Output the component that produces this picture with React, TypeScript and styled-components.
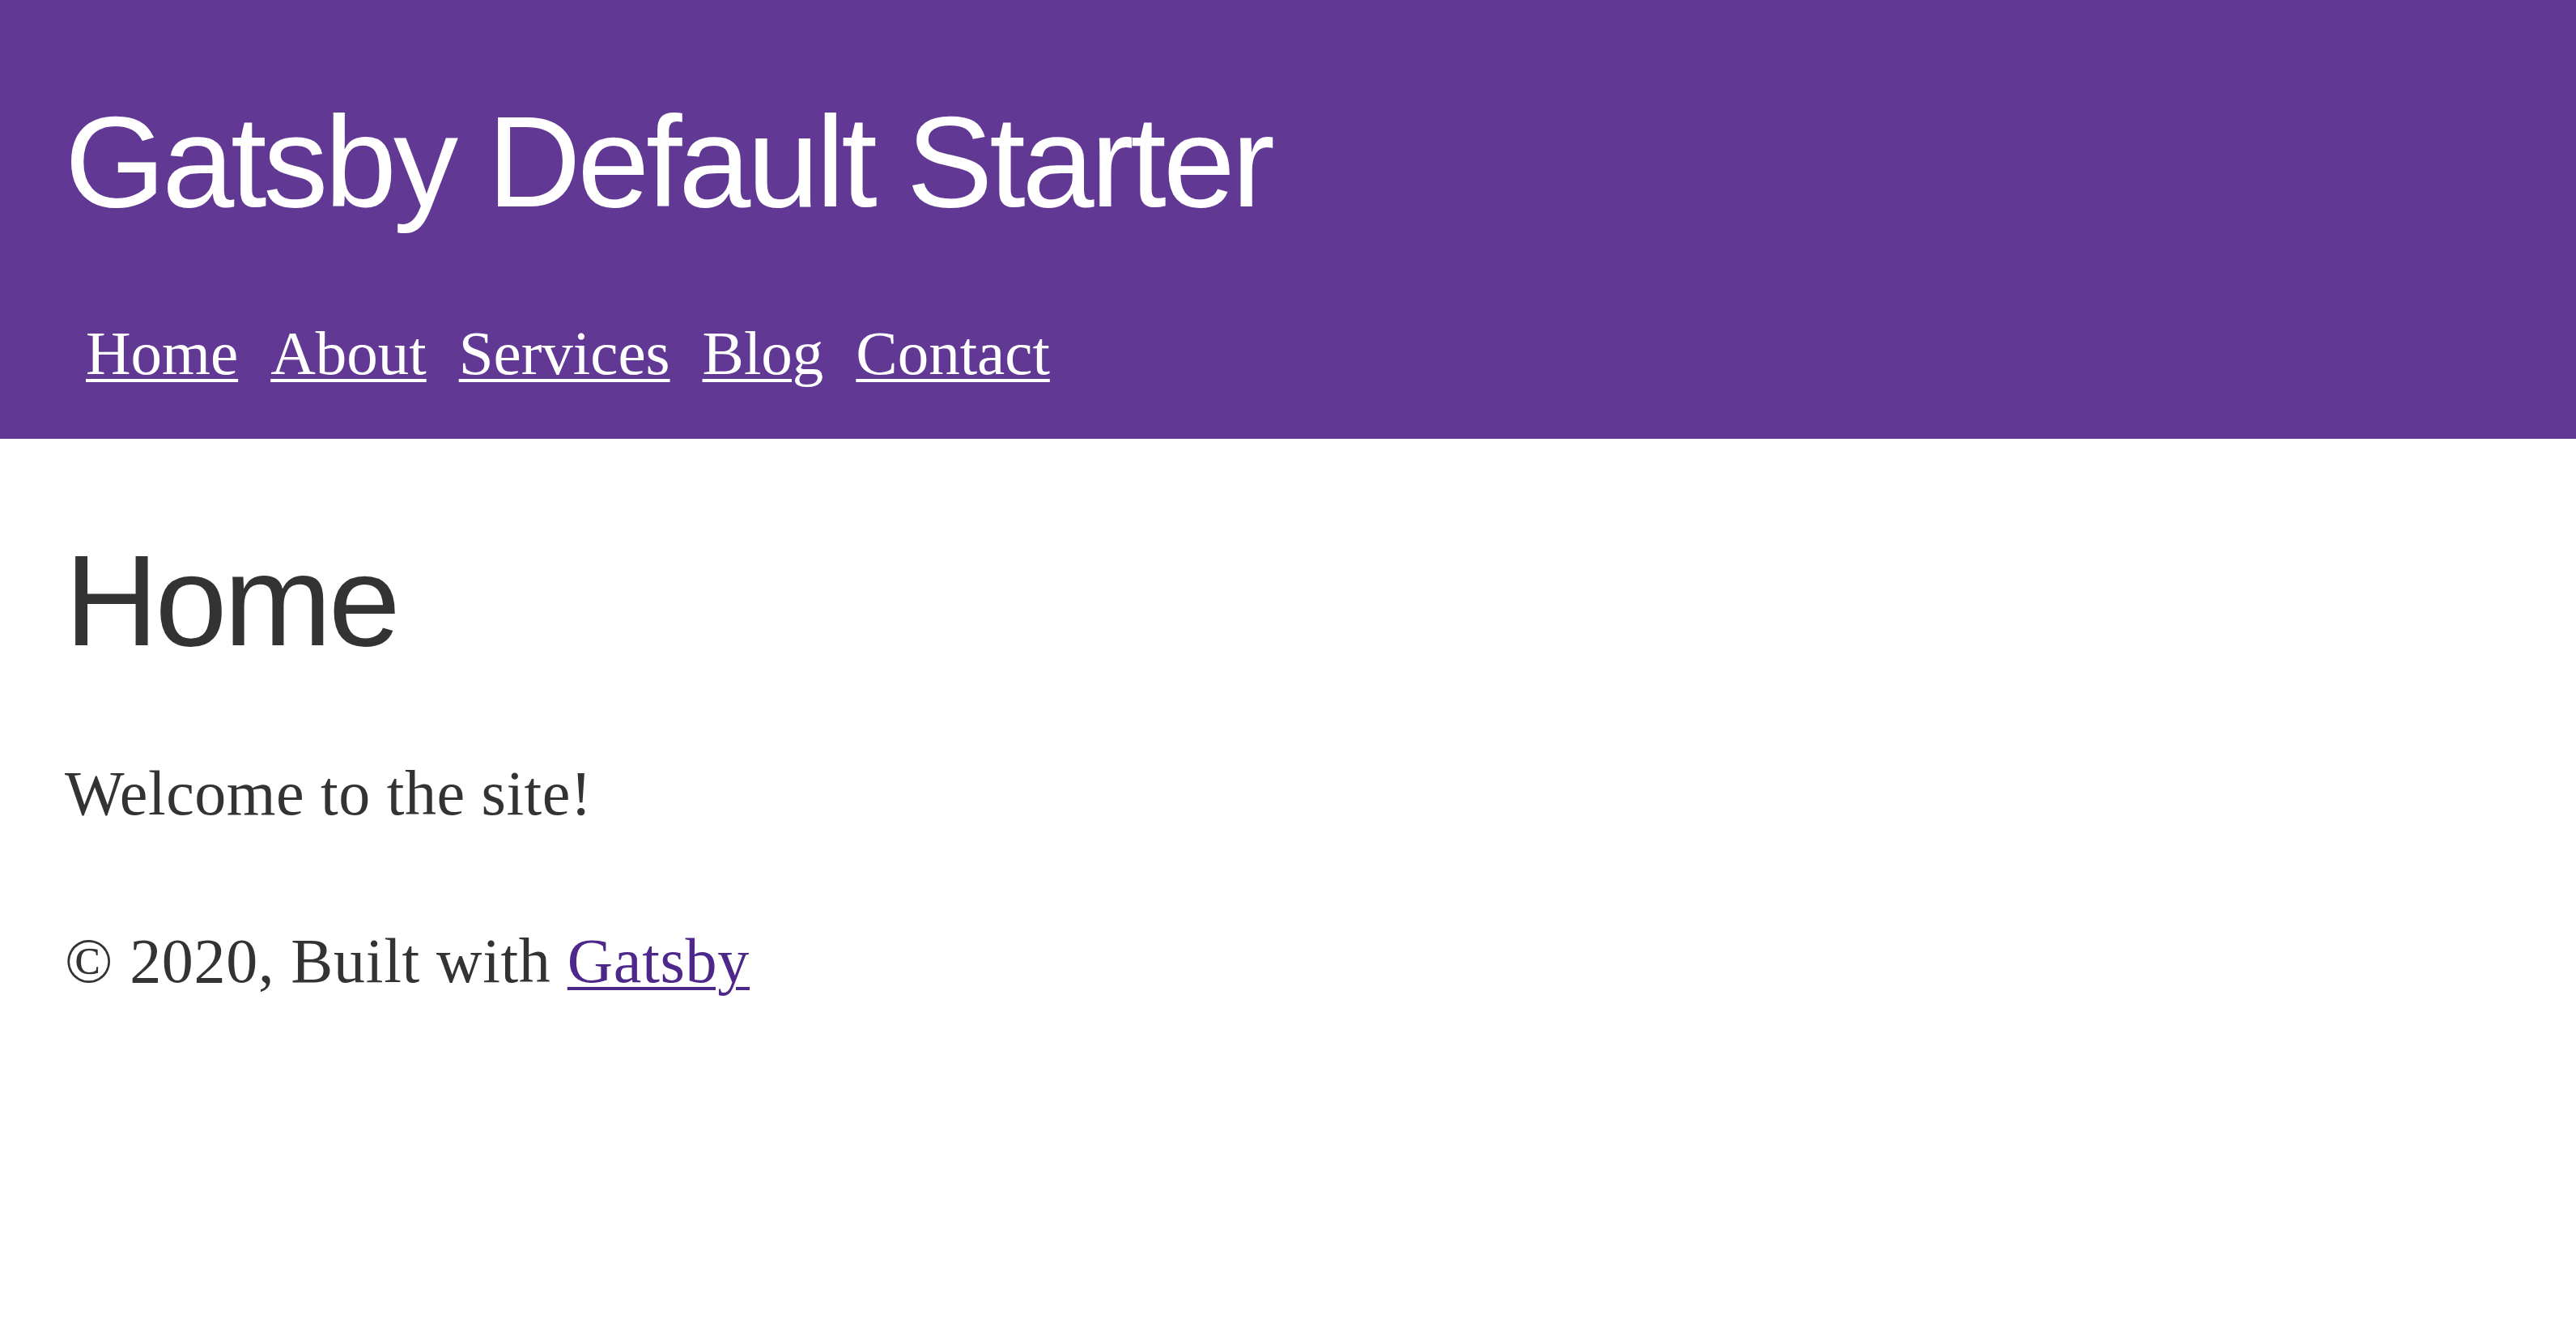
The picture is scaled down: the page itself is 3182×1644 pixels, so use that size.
import React from "react";
import styled, { createGlobalStyle } from "styled-components";

const GlobalStyle = createGlobalStyle`
  html, body {
    margin: 0;
    padding: 0;
    background: #ffffff;
  }
  body {
    font-family: "Liberation Serif", "Times New Roman", serif;
    color: #333333;
  }
`;

const Header = styled.header`
  background: #613994;
  padding: 112px 0 56px 80px;
  display: flex;
  flex-direction: column;
  gap: 98px;
`;

const SiteTitle = styled.h1`
  margin: 0;
  font-family: "Liberation Sans", Arial, sans-serif;
  font-weight: 400;
  font-size: 160px;
  line-height: 176px;
  letter-spacing: -4.2px;
  color: #ffffff;
`;

const Nav = styled.nav`
  display: flex;
  gap: 40px;
  padding-left: 26px;
`;

const NavLink = styled.a`
  font-family: "Liberation Serif", "Times New Roman", serif;
  font-size: 77px;
  line-height: 100px;
  color: #ffffff;
  text-decoration: underline;
  text-decoration-thickness: 4px;
  text-underline-offset: 6px;
  cursor: pointer;
`;

const Main = styled.main`
  padding: 112px 0 0 80px;
  display: flex;
  flex-direction: column;
`;

const PageTitle = styled.h1`
  margin: 0;
  font-family: "Liberation Sans", Arial, sans-serif;
  font-weight: 400;
  font-size: 160px;
  line-height: 176px;
  letter-spacing: -4px;
  color: #333333;
`;

const Paragraph = styled.p`
  margin: 100px 0 0;
  font-size: 78px;
  line-height: 100px;
  letter-spacing: 0.5px;
  color: #333333;
`;

const Footer = styled.footer`
  margin-top: 107px;
  font-size: 78px;
  line-height: 100px;
  letter-spacing: 0.7px;
  color: #333333;
`;

const FooterLink = styled.a`
  color: #4d2789;
  text-decoration: underline;
  text-decoration-thickness: 4px;
  text-underline-offset: 6px;
`;

const links = ["Home", "About", "Services", "Blog", "Contact"];

export default function App() {
  return (
    <>
      <GlobalStyle />
      <Header>
        <SiteTitle>Gatsby Default Starter</SiteTitle>
        <Nav>
          {links.map((l) => (
            <NavLink key={l}>{l}</NavLink>
          ))}
        </Nav>
      </Header>
      <Main>
        <PageTitle>Home</PageTitle>
        <Paragraph>Welcome to the site!</Paragraph>
        <Footer>
          © 2020, Built with <FooterLink>Gatsby</FooterLink>
        </Footer>
      </Main>
    </>
  );
}
